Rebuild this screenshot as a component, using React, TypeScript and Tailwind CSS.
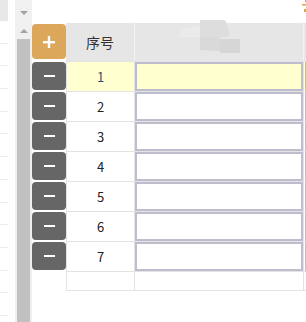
import React from 'react';

const rows = [1, 2, 3, 4, 5, 6, 7];
const font = { fontFamily: '"Noto Sans CJK SC", "Noto Sans", sans-serif' };

const Plus = () => (
  <svg width="12" height="12" viewBox="0 0 12 12">
    <rect x="0" y="5" width="12" height="2.4" fill="#fff" />
    <rect x="4.8" y="0" width="2.4" height="12" fill="#fff" />
  </svg>
);

const Minus = () => <div className="w-[11px] h-[2.5px] bg-white" />;

const Watermark = () => (
  <svg className="absolute left-[42px] top-[-3px]" width="64" height="37" viewBox="0 0 64 37">
    <path d="M2 17 C2 11 8 8 14 8 C18 5 22 5 26 6 L26 17 Z" fill="#ebebeb" />
    <path d="M23 0 L46 0 C49 0 50 3 50 6 L52 9 L52 17 L23 17 Z" fill="#dddddd" />
    <path d="M23 17 L43 17 L43 31 L23 30 Z" fill="#d9d9d9" />
    <path d="M43 19 L63 19 L63 33 L43 33 Z" fill="#d6d6d6" />
  </svg>
);

const App = () => {
  return (
    <div className="w-[306px] h-[322px] overflow-hidden bg-white flex" style={font}>
      {/* left strip */}
      <div className="w-[8px] flex flex-col shrink-0">
        <div className="h-[21px] bg-[#e8e8e8] shrink-0" />
        {Array.from({ length: 13 }).map((_, i) => (
          <div key={i} className="h-[22.7px] border-b border-[#ebebeb] shrink-0" />
        ))}
      </div>
      <div className="w-[7px] shrink-0" />
      {/* scrollbar */}
      <div className="w-[17px] shrink-0 bg-[#f0f0f0] flex flex-col">
        <div className="h-[11px]" />
        <div className="flex justify-center">
          <div className="w-0 h-0 border-l-[4px] border-r-[4px] border-t-[4px] border-l-transparent border-r-transparent border-t-[#a3a3a3]" />
        </div>
        <div className="h-[14px]" />
        <div className="flex justify-center">
          <div className="w-0 h-0 border-l-[4px] border-r-[4px] border-b-[4px] border-l-transparent border-r-transparent border-b-[#a3a3a3]" />
        </div>
        <div className="h-[6px]" />
        <div className="flex-1 ml-[2px] w-[13px] bg-[#c1c1c1]" />
      </div>
      {/* table */}
      <div className="flex flex-col min-w-0 shrink-0 w-[274px]">
        <div className="h-[23px] flex justify-end">
          <svg width="4" height="14" viewBox="0 0 4 14" className="shrink-0">
            <rect x="3" y="0" width="1" height="2" fill="#e5a444" />
            <rect x="0" y="4" width="4" height="1.5" fill="#e5a444" />
            <rect x="2" y="9" width="2" height="3" fill="#e5a444" />
          </svg>
        </div>
        {/* header */}
        <div className="flex h-[38px] w-[320px]">
          <div className="w-[34px] shrink-0 pt-[1px]">
            <div className="h-[35px] rounded-[4px] bg-[#dca65b] flex items-center justify-center">
              <Plus />
            </div>
          </div>
          <div className="w-[68px] shrink-0 bg-[#e6e6e6] flex items-center justify-center text-[14px] text-[#333]">
            序号
          </div>
          <div className="w-[169px] shrink-0 bg-[#e6e6e6] border-l border-[#f3f3f3] relative">
            <Watermark />
          </div>
          <div className="w-[40px] shrink-0 bg-[#e6e6e6] border-l border-[#f3f3f3]" />
        </div>
        {/* rows */}
        {rows.map((n) => {
          const active = n === 1;
          const bg = active ? 'bg-[#ffffd0]' : 'bg-white';
          return (
            <div key={n} className="flex h-[30px] w-[320px]">
              <div className="w-[34px] shrink-0 pt-[1px]">
                <div className="h-[28px] rounded-[4px] bg-[#666666] flex items-center justify-center">
                  <Minus />
                </div>
              </div>
              <div className={`w-[68px] shrink-0 border-l border-t border-[#e3e3e3] ${bg} flex items-center justify-center text-[13px] ${active ? 'text-[#1f4e79]' : 'text-[#222]'}`}>
                {n}
              </div>
              <div className={`w-[169px] shrink-0 border-l border-t border-[#e3e3e3] ${bg} flex`}>
                <div className={`w-[168px] h-[29px] border-2 border-[#bdbdcd] ${bg}`} />
              </div>
              <div className={`w-[40px] shrink-0 border-l border-t border-[#e3e3e3] ${bg} pl-[1px]`}>
                <div className={`w-[38px] h-[29px] border-2 border-[#bdbdcd] ${bg}`} />
              </div>
            </div>
          );
        })}
        {/* empty trailing row */}
        <div className="flex h-[20px] w-[320px]">
          <div className="w-[34px] shrink-0" />
          <div className="w-[68px] shrink-0 border-l border-t border-b border-[#e3e3e3]" />
          <div className="w-[169px] shrink-0 border-l border-t border-b border-[#e3e3e3]" />
          <div className="w-[40px] shrink-0 border-l border-t border-b border-[#e3e3e3]" />
        </div>
      </div>
    </div>
  );
};

export default App;
